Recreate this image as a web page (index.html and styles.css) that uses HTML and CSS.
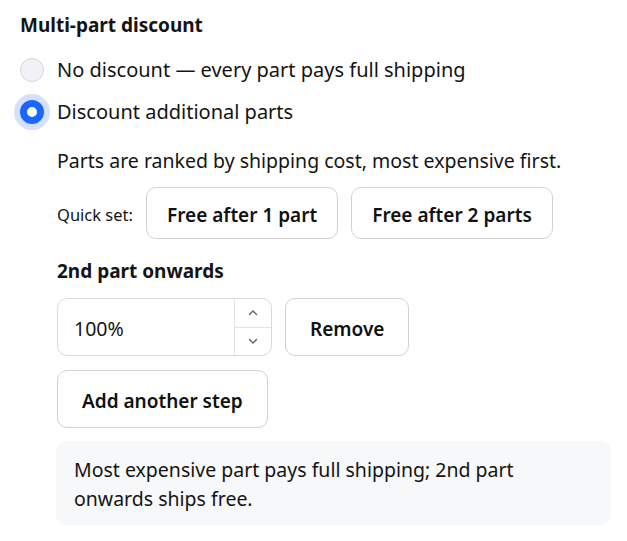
FILE: index.html
```html
<!DOCTYPE html>
<html lang="en">
<head>
<meta charset="utf-8">
<title>Multi-part discount</title>
<link rel="stylesheet" href="styles.css">
</head>
<body>
<div class="panel">
  <h2 class="title">Multi-part discount</h2>
  <div class="radios">
    <label class="radio-row">
      <span class="radio"></span>
      <span class="radio-label">No discount — every part pays full shipping</span>
    </label>
    <label class="radio-row">
      <span class="radio radio-on"></span>
      <span class="radio-label">Discount additional parts</span>
    </label>
  </div>
  <div class="detail">
    <p class="hint">Parts are ranked by shipping cost, most expensive first.</p>
    <div class="quick">
      <span class="quick-label">Quick set:</span>
      <button class="btn btn-quick">Free after 1 part</button>
      <button class="btn btn-quick">Free after 2 parts</button>
    </div>
    <div class="step-title">2nd part onwards</div>
    <div class="step-row">
      <div class="num">
        <span class="num-value">100%</span>
        <span class="spin">
          <span class="spin-btn spin-up"><svg width="12" height="8" viewBox="0 0 12 8"><path d="M2.5 5.5 L6 2 L9.5 5.5" fill="none" stroke="#5b6270" stroke-width="1.4" stroke-linecap="round" stroke-linejoin="round"/></svg></span>
          <span class="spin-btn"><svg width="12" height="8" viewBox="0 0 12 8"><path d="M2.5 2.5 L6 6 L9.5 2.5" fill="none" stroke="#5b6270" stroke-width="1.4" stroke-linecap="round" stroke-linejoin="round"/></svg></span>
        </span>
      </div>
      <button class="btn btn-step">Remove</button>
    </div>
    <div class="add-row">
      <button class="btn btn-step">Add another step</button>
    </div>
    <div class="summary">
      <p class="summary-text">Most expensive part pays full shipping; 2nd part onwards ships free.</p>
    </div>
  </div>
</div>
</body>
</html>
```
FILE: styles.css
```css
* { box-sizing: border-box; }
html, body { margin: 0; padding: 0; background: #ffffff; }
body {
  font-family: "Noto Sans", "Open Sans", "DejaVu Sans", sans-serif;
  color: #141414;
}
.panel { padding: 12px 17px 0 20px; display: flex; flex-direction: column; }
.title {
  margin: 0;
  font-size: 19px;
  line-height: 26px;
  font-weight: 700;
}
.radios { margin-top: 11px; display: flex; flex-direction: column; }
.radio-row {
  display: flex;
  align-items: center;
  height: 42px;
  gap: 13px;
}
.radio {
  width: 24px;
  height: 24px;
  border-radius: 50%;
  background: #f1f2f4;
  border: 1px solid #d3d6db;
  flex: none;
}
.radio-on {
  background: #ffffff;
  border: 7px solid #1a66ff;
  box-shadow: 0 0 0 6px #d3e1ff;
}
.radio-label { font-size: 20px; line-height: 26px; }
.detail { margin-left: 37px; display: flex; flex-direction: column; }
.hint { margin: 15px 0 0; font-size: 19.5px; line-height: 26px; }
.quick { margin-top: 13px; display: flex; align-items: center; gap: 13px; }
.quick-label { font-size: 16.5px; padding-top: 2px; }
.btn {
  font-family: inherit;
  font-weight: 600;
  color: #111111;
  background: #ffffff;
  border: 1.5px solid #d2d2d2;
  border-radius: 10px;
  cursor: pointer;
}
.btn-quick { height: 52px; padding: 3px 20px 0; font-size: 19px; }
.step-title { margin-top: 19px; font-size: 19px; line-height: 26px; font-weight: 700; }
.step-row { margin-top: 14px; display: flex; gap: 13px; }
.num {
  width: 215px;
  height: 58px;
  border: 1px solid #d6d9de;
  border-radius: 10px;
  display: flex;
  align-items: stretch;
  overflow: hidden;
}
.num-value { flex: 1; display: flex; align-items: center; padding: 2px 0 0 16px; font-size: 19.5px; }
.spin { width: 37px; border-left: 1px solid #e1e3e7; display: flex; flex-direction: column; }
.spin-btn { flex: 1; display: flex; align-items: center; justify-content: center; }
.spin-up { border-bottom: 1px solid #e1e3e7; }
.btn-step { height: 58px; padding: 3px 24px 0; font-size: 19px; }
.add-row { margin-top: 14px; display: flex; }
.summary {
  margin: 13px 0 0 -1px;
  width: 555px;
  background: #f7f8f9;
  border-radius: 10px;
  padding: 14px 18px 12px;
}
.summary-text { margin: 0; font-size: 19.5px; line-height: 29px; max-width: 470px; }
```
